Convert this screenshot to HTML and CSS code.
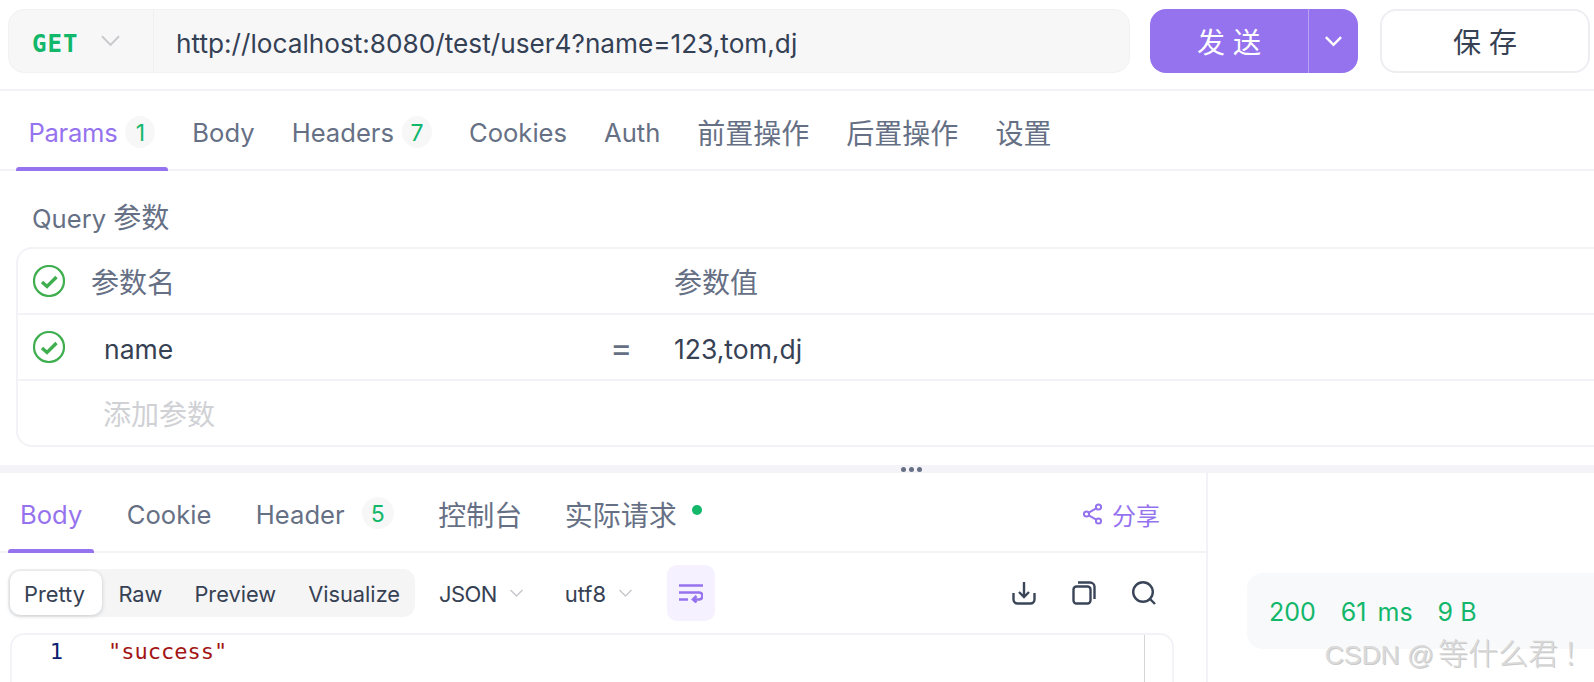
FILE: index.html
```html
<!DOCTYPE html>
<html lang="zh">
<head>
<meta charset="utf-8">
<title>Request</title>
<link rel="stylesheet" href="styles.css">
</head>
<body>
<main class="app">
  <section class="request">
    <div class="topbar">
      <div class="urlbar">
        <div class="method"><span class="get">GET</span>
          <svg class="chev" viewBox="0 0 20 12"><path d="M1 1l9 9 9-9"/></svg>
        </div>
        <div class="url">http://localhost:8080/test/user4?name=123,tom,dj</div>
      </div>
      <div class="send">
        <div class="send-main">发送</div>
        <div class="send-more"><svg viewBox="0 0 20 12"><path d="M2 2l8 8 8-8"/></svg></div>
      </div>
      <div class="save">保存</div>
    </div>
    <nav class="tabs req-tabs">
      <div class="tab active params">Params<span class="badge">1</span></div>
      <div class="tab">Body</div>
      <div class="tab">Headers<span class="badge">7</span></div>
      <div class="tab">Cookies</div>
      <div class="tab">Auth</div>
      <div class="tab cjk">前置操作</div>
      <div class="tab cjk">后置操作</div>
      <div class="tab cjk">设置</div>
    </nav>
    <div class="query-title">Query <span class="cjk">参数</span></div>
    <div class="table">
      <div class="row head">
        <svg class="check" viewBox="0 0 32 32"><circle cx="16" cy="16" r="15"/><path d="M9 17l5 4.500 9.500-9.500"/></svg>
        <div class="cell-name th">参数名</div>
        <div class="cell-value th">参数值</div>
      </div>
      <div class="row">
        <svg class="check" viewBox="0 0 32 32"><circle cx="16" cy="16" r="15"/><path d="M9 17l5 4.500 9.500-9.500"/></svg>
        <div class="cell-name pad latin">name</div>
        <div class="eq">=</div>
        <div class="cell-value latin">123,tom,dj</div>
      </div>
      <div class="row last">
        <div class="cell-name pad add">添加参数</div>
      </div>
    </div>
  </section>
  <div class="splitter"><span></span><span></span><span></span></div>
  <section class="response">
    <div class="resp-left">
      <nav class="tabs resp-tabs">
        <div class="tab active">Body</div>
        <div class="tab">Cookie</div>
        <div class="tab">Header<span class="badge">5</span></div>
        <div class="tab cjk">控制台</div>
        <div class="tab cjk">实际请求<i class="dot"></i></div>
        <div class="share">
          <svg viewBox="0 0 19 22"><circle cx="3.500" cy="11" r="2.600"/><circle cx="15.500" cy="4" r="2.600"/><circle cx="15.500" cy="18" r="2.600"/><path d="M5.800 9.700l7.400-4.400M5.800 12.300l7.400 4.400"/></svg>
          分享
        </div>
      </nav>
      <div class="toolbar">
        <div class="segments">
          <div class="seg on">Pretty</div>
          <div class="seg">Raw</div>
          <div class="seg">Preview</div>
          <div class="seg">Visualize</div>
        </div>
        <div class="select"><span class="json">JSON</span><svg class="chev" viewBox="0 0 20 12"><path d="M2 2l8 8 8-8"/></svg></div>
        <div class="select">utf8<svg class="chev" viewBox="0 0 20 12"><path d="M2 2l8 8 8-8"/></svg></div>
        <div class="wrap"><svg viewBox="0 0 24 19"><path d="M0 1.500H24M0 8.500H20a3.500 3.500 0 0 1 0 7H14M17.500 12l-3.500 3.500 3.500 3M0 15.500H9"/></svg></div>
        <div class="tools">
          <svg viewBox="0 0 24 24"><path d="M12 1v15M7 11l5 5 5-5M1.500 12v6.500a4 4 0 0 0 4 4h13a4 4 0 0 0 4-4V12"/></svg>
          <svg viewBox="0 0 24 24"><rect x="1.500" y="5.500" width="17" height="17" rx="3"/><path d="M6 1.500h12a4.500 4.500 0 0 1 4.500 4.500v12"/></svg>
          <svg viewBox="0 0 24 24"><circle cx="11" cy="11" r="9.800"/><path d="M18 18l5 5"/></svg>
        </div>
      </div>
      <div class="code">
        <div class="code-line"><span class="ln">1</span><span class="str">"success"</span></div>
        <div class="scroll"></div>
      </div>
    </div>
    <div class="resp-right">
      <div class="status"><span>200</span><span class="ms">61 ms</span><span>9 B</span></div>
    </div>
    <div class="mark"><span class="mark-latin">CSDN @</span>等什么君<span class="bang">！</span></div>
  </section>
</main>
</body>
</html>
```
FILE: styles.css
```css
* { box-sizing: border-box; }
html, body { margin: 0; height: 100%; overflow: hidden; background: #fff; }
body { font-family: Inter, "Noto Sans CJK SC", sans-serif; color: #364153; }
.app { width: 1594px; height: 682px; overflow: hidden; display: flex; flex-direction: column; }
.request { height: 465px; flex: none; }
.topbar { display: flex; height: 91px; padding: 9px 0 0 8px; border-bottom: 2px solid #f3f3f7; }
.urlbar { width: 1122px; height: 64px; display: flex; background: #f7f7f8; border: 1px solid #f2f2f5; border-radius: 16px; }
.method { width: 145px; display: flex; align-items: center; padding-left: 23px; border-right: 1px solid #f0f0f3; }
.get { font-family: "DejaVu Sans Mono", monospace; font-weight: 700; font-size: 24px; color: #12b76a; letter-spacing: 1px; padding-top: 5px; }
.chev { fill: none; stroke: #c8c9cd; stroke-width: 2; }
.method .chev { width: 19px; height: 12px; margin-left: 23px; }
.url { padding-left: 22px; padding-top: 5px; display: flex; align-items: center; font-size: 26.200px; color: #344054; }
.send { width: 208px; height: 64px; margin-left: 20px; display: flex; background: #9673ee; border-radius: 16px; color: #fff; }
.send-main { width: 159px; display: flex; align-items: center; justify-content: center; font-size: 28px; letter-spacing: 8px; padding-left: 8px; border-right: 1px solid #b9a3f4; }
.send-more { flex: 1; display: flex; align-items: center; justify-content: center; }
.send-more svg { width: 19px; height: 12px; fill: none; stroke: #fff; stroke-width: 2.600; }
.save { width: 210px; height: 64px; margin-left: 22px; display: flex; align-items: center; justify-content: center; font-size: 28px; letter-spacing: 8px; padding-left: 8px; border: 2px solid #edeef2; border-radius: 16px; }
.tabs { display: flex; align-items: center; border-bottom: 2px solid #f3f3f7; color: #667085; font-size: 25.600px; }
.req-tabs { height: 80px; padding-left: 16px; }
.tab { height: 100%; display: flex; align-items: center; padding: 4px 12.500px 0; margin-right: 12px; position: relative; }
.tab.cjk { font-size: 28px; }
.tab.active { color: #9673ee; }
.tab.params { letter-spacing: -.3px; }
.tab.active::after { content: ""; position: absolute; left: 0; right: 0; bottom: -2px; height: 4px; background: #9673ee; border-radius: 3px 3px 0 0; }
.badge { width: 30px; height: 32px; padding-top: 2px; border-radius: 50%; background: #f7f7f8; color: #12b76a; font-size: 23px; display: flex; align-items: center; justify-content: center; margin-left: 8px; }
.query-title { height: 76px; padding: 29px 0 0 32px; font-size: 25.600px; color: #667085; line-height: 36px; }
.query-title .cjk { font-size: 28px; }
.table { margin-left: 16px; width: 1600px; height: 200px; border: 2px solid #f3f3f7; border-radius: 16px; }
.row { height: 66px; display: flex; align-items: center; position: relative; border-bottom: 2px solid #f3f3f7; font-size: 28px; }
.row.last { border-bottom: 0; }
.check { width: 32px; height: 32px; margin-left: 15px; flex: none; fill: none; stroke: #3fae4f; }
.check circle { stroke-width: 2.200; }
.check path { stroke-width: 3.400; }
.cell-name { width: 587px; margin-left: 26px; }
.cell-name.pad { padding-left: 13px; }
.latin { font-size: 26.500px; padding-top: 3px; }
.th { color: #667085; }
.eq { position: absolute; left: 592px; font-size: 34px; color: #667085; }
.cell-value { position: absolute; left: 656px; }
.th.cell-value { color: #667085; }
.add { margin-left: 72px; padding-bottom: 2px; color: #d0d1d5; }
.splitter { height: 8px; flex: none; background: #f3f3f8; display: flex; align-items: center; padding-left: 901px; gap: 3px; }
.splitter span { width: 5px; height: 5px; border-radius: 50%; background: #667085; }
.response { flex: 1; display: flex; position: relative; }
.resp-left { width: 1206px; flex: none; }
.resp-right { flex: 1; border-left: 2px solid #f3f3f7; }
.resp-tabs { height: 80px; padding-left: 8px; }
.resp-tabs .tab { padding: 4px 12px 0; margin-right: 20.500px; }
.resp-tabs .tab.cjk { margin-right: 18.500px; }
.resp-tabs .badge { width: 32px; margin: -2px 0 0 17px; }
.dot { width: 10px; height: 10px; border-radius: 50%; background: #12b76a; margin: -8px 0 0 15px; }
.share { margin-left: auto; margin-right: 46px; display: flex; align-items: center; gap: 10px; color: #9673ee; font-size: 24px; padding-top: 4px; }
.share svg { width: 19px; height: 22px; fill: none; stroke: #9673ee; stroke-width: 2; }
.toolbar { display: flex; align-items: center; height: 80px; padding: 0 0 0 8px; }
.segments { width: 407px; height: 48px; background: #f5f5f6; border-radius: 12px; display: flex; align-items: center; padding-left: 2px; font-size: 21.800px; }
.seg { padding: 2px 16px 0; height: 44px; display: flex; align-items: center; }
.seg.on { padding: 2px 17.500px 0 14px; background: #fff; border-radius: 10px; box-shadow: 0 1px 4px rgba(16,24,40,.2); }
.select { display: flex; align-items: center; gap: 12px; margin-left: 24px; font-size: 22px; margin-right: 17px; padding-top: 2px; }
.json { letter-spacing: -.6px; }
.select .chev { width: 15px; height: 10px; margin-top: -3px; }
.wrap { width: 48px; height: 56px; margin-left: 17px; background: #f5f1ff; border-radius: 10px; display: flex; align-items: center; justify-content: center; }
.wrap svg { width: 24px; height: 19px; fill: none; stroke: #9673ee; stroke-width: 2.600; }
.tools { margin-left: auto; margin-right: 50px; display: flex; gap: 36px; }
.tools svg { width: 24px; height: 24px; fill: none; stroke: #3a4658; stroke-width: 2.400; }
.code { margin-left: 10px; width: 1164px; height: 60px; border: 2px solid #f3f3f7; border-bottom: 0; border-radius: 14px 14px 0 0; position: relative; }
.code-line { font-family: "DejaVu Sans Mono", monospace; font-size: 22px; line-height: 28px; display: flex; padding-top: 3px; }
.ln { width: 51px; text-align: right; color: #0b216f; margin-right: 45px; }
.str { color: #a31515; }
.scroll { position: absolute; top: 0; bottom: 0; right: 27px; width: 1px; background: #d5d5d5; }
.status { margin: 100px 0 0 39px; height: 76px; width: 400px; border-radius: 16px; background: #f8f9fb; display: flex; align-items: center; padding: 2px 0 0 22px; gap: 25px; color: #12b76a; font-size: 25px; }
.ms { word-spacing: 4px; }
.mark { position: absolute; right: 6px; top: 163px; font-size: 30px; line-height: 36px; font-weight: 300; color: #dadada; text-shadow: 1px 1px 0 #cacaca; font-family: "Liberation Sans", "Noto Sans CJK SC", sans-serif; }
.mark-latin { font-size: 26.500px; margin-right: 4px; }
.bang { position: relative; left: 5px; }
```
